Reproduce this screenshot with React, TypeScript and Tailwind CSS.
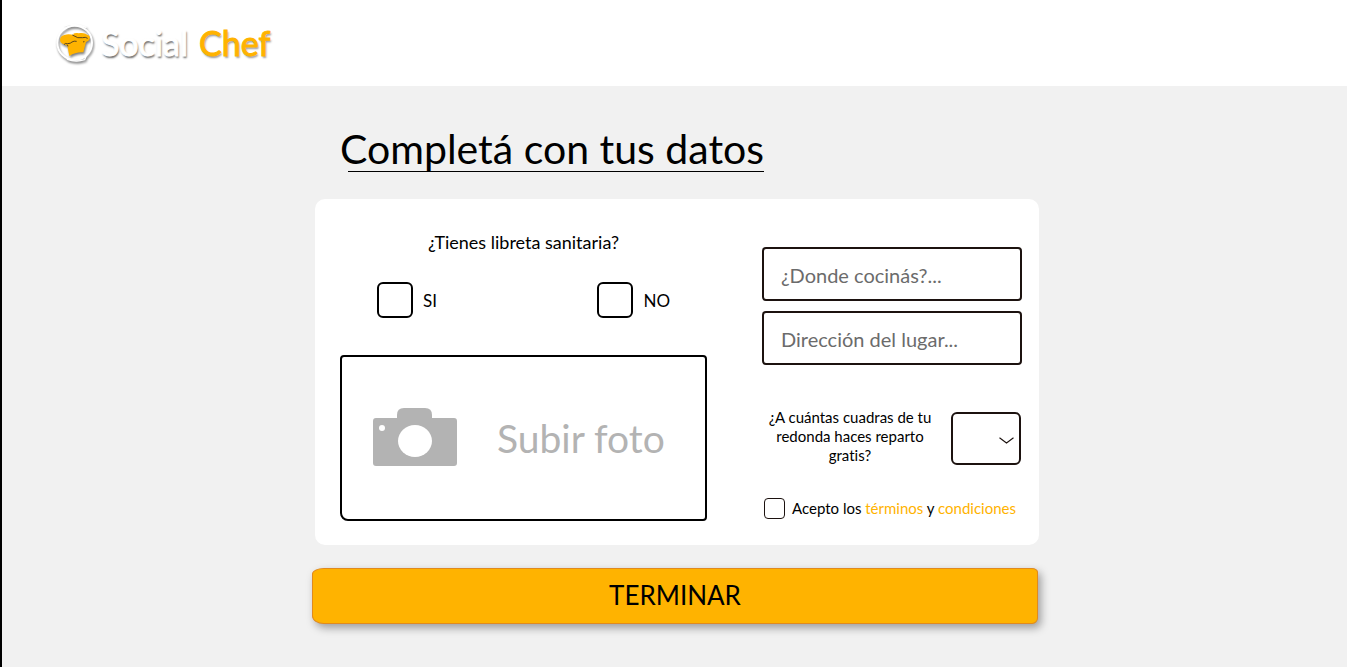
import { useState } from "react";

function ChefHatMark() {
  return (
    <svg viewBox="0 0 132 132" className="size-11 shrink-0 overflow-visible drop-shadow-[1px_2px_1px_rgba(0,0,0,0.5)]" aria-hidden="true">
      <ellipse cx="62" cy="65" rx="52" ry="51" fill="none" stroke="#fff" strokeWidth="6" />
      <path d="M34 14 Q62 4 96 19" fill="none" stroke="#fff" strokeWidth="4" strokeLinecap="round" />
      <path d="M40 115 Q66 125 92 116 L96 106" fill="none" stroke="#fff" strokeWidth="4" strokeLinecap="round" />
      <path
        d="M30 70 C14 66 14 46 31 42 C41 38 51 40 58 42 C56 37 64 34 74 37 C86 34 94 37 99 41 C112 44 110 58 96 63 L88 94 Q66 92 46 105 L40 74 Z"
        fill="#ffb300"
      />
      <path d="M30 71 Q32 66 40 68 Q50 68 54 63 Q60 59 68 61 M55 42 Q72 54 86 50 Q94 47 101 52 M40 71 L42 76 M90 60 L89 64" fill="none" stroke="#5b451c" strokeWidth="3" />
    </svg>
  );
}

function Logo() {
  return (
    <a href="#" aria-label="Social Chef" className="flex items-center gap-[3px] text-[34px] leading-none">
      <ChefHatMark />
      <span className="text-white [-webkit-text-stroke:1px_#fff] [text-shadow:1px_2px_2px_rgba(0,0,0,0.6)]">Social</span>
      <span className="ml-2 text-[#ffb300] [-webkit-text-stroke:1px_#ffb300] [text-shadow:1px_2px_2px_rgba(0,0,0,0.4)]">Chef</span>
    </a>
  );
}

function CameraIcon() {
  return (
    <svg viewBox="0 0 84 58" className="mb-0.5 h-[58px] w-[84px] shrink-0" aria-hidden="true">
      <path
        d="M3 10 H24 V7 Q24 0 31 0 H52 Q59 0 59 7 V10 H81 Q84 10 84 13 V55 Q84 58 81 58 H3 Q0 58 0 55 V13 Q0 10 3 10 Z"
        fill="#b3b3b3"
      />
      <ellipse cx="42" cy="33" rx="17" ry="16" fill="#fff" />
      <circle cx="9" cy="20" r="3" fill="#fff" />
    </svg>
  );
}

function Choice({ value, label }: { value: string; label: string }) {
  return (
    <label className="flex items-center gap-2.5 text-[17px]">
      <input
        type="radio"
        name="libreta"
        value={value}
        className="size-9 appearance-none rounded-md border-2 border-black bg-white checked:bg-[#ffb300]"
      />
      <span className="pt-0.5">{label}</span>
    </label>
  );
}

function TextField({ label }: { label: string }) {
  return (
    <input
      type="text"
      aria-label={label}
      placeholder={label}
      className="h-[54px] w-full rounded-[4px] border-2 border-[#1c120f] bg-white px-[17px] pt-0.5 text-xl placeholder:text-[#6b6b6b]"
    />
  );
}

export default function App() {
  const [photo, setPhoto] = useState("");

  return (
    <div className="min-h-screen border-l-2 border-black bg-[#f1f1f1] font-['Lato','Noto_Sans',sans-serif] text-black [font-variant-ligatures:none]">
      <header className="flex h-[86px] items-center bg-white px-[52px]">
        <Logo />
      </header>

      <main className="pt-10 pl-0.5">
        <form className="mx-auto flex max-w-[727px] flex-col" onSubmit={(e) => e.preventDefault()}>
          <div className="ml-7 w-fit">
            <h1 className="text-[41px] leading-[45px]">Completá con tus datos</h1>
            <div className="ml-2 h-px bg-black" />
          </div>

          <section className="mt-[27px] ml-[3px] grid grid-cols-[367fr_260fr] gap-[55px] rounded-[10px] bg-white pt-8 pr-[17px] pb-6 pl-[25px]">
            <div className="flex flex-col">
              <fieldset>
                <legend className="w-full text-center text-lg leading-[22px]">¿Tienes libreta sanitaria?</legend>
                <div className="mt-[29px] flex justify-between px-[37px]">
                  <Choice value="si" label="SI" />
                  <Choice value="no" label="NO" />
                </div>
              </fieldset>
              <label className="relative mt-[37px] flex h-[166px] cursor-pointer items-center gap-10 rounded-[4px] rounded-bl-lg border-2 border-black pl-[31px] text-[39px] text-[#b3b3b3]">
                <CameraIcon />
                <span>{photo || "Subir foto"}</span>
                <input type="file" accept="image/*" className="sr-only" onChange={(e) => setPhoto(e.target.files?.[0]?.name ?? "")} />
              </label>
            </div>

            <div className="flex flex-col pt-4">
              <div className="flex flex-col gap-2.5">
                <TextField label="¿Donde cocinás?..." />
                <TextField label="Dirección del lugar..." />
              </div>

              <div className="mt-[43px] flex items-start justify-between pr-px">
                <label htmlFor="cuadras" className="w-[176px] text-center text-[15px] leading-[19px]">
                  ¿A cuántas cuadras de tu redonda haces reparto gratis?
                </label>
                <div className="relative mt-1">
                  <select id="cuadras" defaultValue="" className="h-[53px] w-[70px] appearance-none rounded-md border-2 border-[#1c120f] bg-white pl-3 text-lg">
                    <option value=""></option>
                    <option>5</option>
                    <option>10</option>
                    <option>15</option>
                  </select>
                  <svg viewBox="0 0 15 7" className="pointer-events-none absolute top-[25px] right-[7px] h-[7px] w-[15px]" aria-hidden="true">
                    <path d="M0.5 0.7 L7.5 6 L14.5 0.7" fill="none" stroke="#1c120f" strokeWidth="1.1" />
                  </svg>
                </div>
              </div>

              <div className="mt-[33px] flex items-center gap-[7px] pl-0.5 text-[15px] leading-[21px]">
                <input id="acepto" type="checkbox" className="size-[21px] appearance-none rounded-[4px] border border-[#1c120f] bg-white checked:bg-[#ffb300]" />
                <label htmlFor="acepto" className="whitespace-nowrap">
                  Acepto los <a href="#terminos" className="text-[#ffb300]">términos</a> y{" "}
                  <a href="#condiciones" className="text-[#ffb300]">condiciones</a>
                </label>
              </div>
            </div>
          </section>

          <button
            type="submit"
            className="mt-[23px] mr-px h-14 rounded-tl-[12px_6px] rounded-tr-[6px_4px] rounded-br-[6px] rounded-bl-[12px_8px] border border-[#e08a1e] bg-[#ffb300] pb-0.5 text-[26px] shadow-[3px_4px_8px_rgba(0,0,0,0.35)]"
          >
            TERMINAR
          </button>
        </form>
      </main>
    </div>
  );
}
